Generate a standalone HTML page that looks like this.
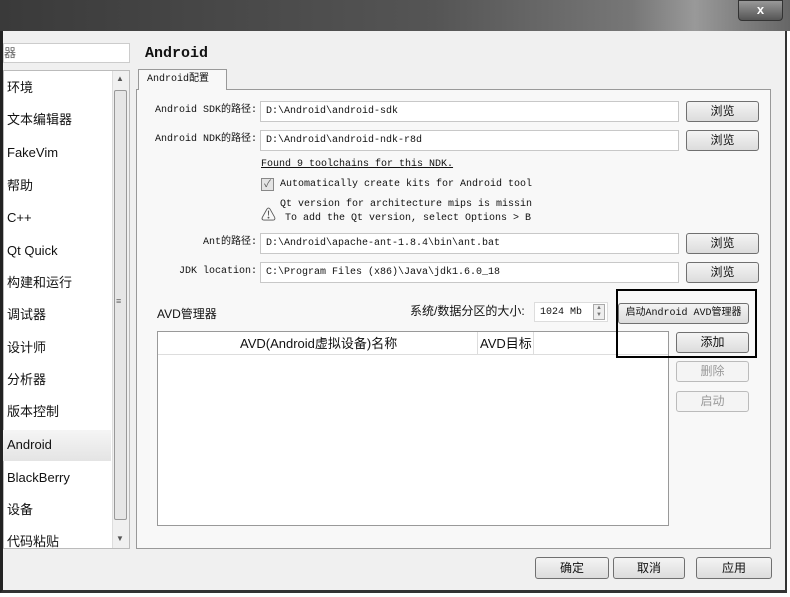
<!DOCTYPE html>
<html><head><meta charset="utf-8"><style>
*{box-sizing:border-box;margin:0;padding:0}
body{width:790px;height:597px;overflow:hidden;background:#fff;position:relative;font-family:"Liberation Sans","Noto Sans CJK SC",sans-serif;font-size:12px;color:#111}
.a{position:absolute}
.mono{font-family:"Liberation Mono","Noto Sans CJK SC",monospace;font-size:10px}
.btn{position:absolute;border:1px solid #707070;border-radius:3px;background:linear-gradient(#f4f4f4,#dcdcdc);text-align:center;font-size:12px;line-height:19px}
.dis{color:#999;border-color:#bbb;background:#f4f4f4}
.field{position:absolute;background:#fff;border:1px solid #c8c8c8;padding-left:5px;line-height:19px}
.lbl{position:absolute;text-align:right;line-height:20px}
.item{position:absolute;left:7px;font-size:13px;line-height:16px}
</style></head><body>
<div class="a" style="left:0;top:0;width:790px;height:31px;background:linear-gradient(90deg,#3a3a3a 0%,#555 55%,#777 80%,#999 88%,#666 100%)"></div>
<div class="a" style="left:738px;top:0;width:45px;height:21px;border:1px solid #333;border-radius:0 0 4px 4px;background:linear-gradient(#999,#555);color:#fff;font-weight:bold;text-align:center;line-height:18px;font-size:13px">x</div>
<div class="a" style="left:0;top:31px;width:787px;height:562px;background:#f0f0f0;border-left:3px solid #222;border-right:2px solid #333;border-bottom:3px solid #333"></div>
<div class="a" style="left:3px;top:43px;width:127px;height:20px;background:#fff;border:1px solid #ccc;font-size:12px;line-height:18px;color:#666">器</div>
<div class="a" style="left:3px;top:70px;width:127px;height:479px;background:#fff;border:1px solid #bbb"></div>
<div class="a" style="left:112px;top:71px;width:17px;height:477px;background:#f0f0f0;border-left:1px solid #ddd"></div>
<div class="a" style="left:114px;top:90px;width:13px;height:430px;background:#e6e6e6;border:1px solid #999;border-radius:2px"></div>
<div class="a" style="left:116px;top:74px;font-size:8px;color:#555">▲</div>
<div class="a" style="left:116px;top:534px;font-size:8px;color:#555">▼</div>
<div class="a" style="left:116px;top:296px;font-size:9px;color:#666">≡</div>
<div class="a" style="left:3px;top:430px;width:108px;height:31px;background:linear-gradient(#f5f5f5,#e4e4e4)"></div>
<div class="item" style="top:80px">环境</div>
<div class="item" style="top:112px">文本编辑器</div>
<div class="item" style="top:145px">FakeVim</div>
<div class="item" style="top:178px">帮助</div>
<div class="item" style="top:210px">C++</div>
<div class="item" style="top:243px">Qt Quick</div>
<div class="item" style="top:275px">构建和运行</div>
<div class="item" style="top:307px">调试器</div>
<div class="item" style="top:340px">设计师</div>
<div class="item" style="top:372px">分析器</div>
<div class="item" style="top:404px">版本控制</div>
<div class="item" style="top:437px">Android</div>
<div class="item" style="top:470px">BlackBerry</div>
<div class="item" style="top:502px">设备</div>
<div class="item" style="top:534px;height:14px;overflow:hidden">代码粘贴</div>
<div class="a mono" style="left:145px;top:45px;font-size:15px;font-weight:bold">Android</div>
<div class="a" style="left:136px;top:89px;width:635px;height:460px;background:#f8f8f8;border:1px solid #999"></div>
<div class="a mono" style="left:138px;top:69px;width:89px;height:21px;background:#f8f8f8;border:1px solid #999;border-bottom:none;padding-left:8px;line-height:20px">Android配置</div>
<div class="lbl mono" style="left:140px;top:101px;width:117px">Android SDK的路径:</div>
<div class="field mono" style="left:260px;top:101px;width:419px;height:21px">D:\Android\android-sdk</div>
<div class="btn" style="left:686px;top:101px;width:73px;height:21px">浏览</div>
<div class="lbl mono" style="left:140px;top:130px;width:117px">Android NDK的路径:</div>
<div class="field mono" style="left:260px;top:130px;width:419px;height:21px">D:\Android\android-ndk-r8d</div>
<div class="btn" style="left:686px;top:130px;width:73px;height:21px">浏览</div>
<div class="a mono" style="left:261px;top:159px;text-decoration:underline">Found 9 toolchains for this NDK.</div>
<div class="a" style="left:261px;top:178px;width:13px;height:13px;border:1px solid #888;background:#e4e4e4;font-size:10px;line-height:11px;text-align:center;color:#555">✓</div>
<div class="a mono" style="left:280px;top:179px">Automatically create kits for Android tool</div>
<div class="a" style="left:261px;top:204px;font-size:15px;color:#555">⚠</div>
<div class="a mono" style="left:280px;top:199px">Qt version for architecture mips is missin</div>
<div class="a mono" style="left:285px;top:213px">To add the Qt version, select Options &gt; B</div>
<div class="lbl mono" style="left:140px;top:233px;width:117px">Ant的路径:</div>
<div class="field mono" style="left:260px;top:233px;width:419px;height:21px">D:\Android\apache-ant-1.8.4\bin\ant.bat</div>
<div class="btn" style="left:686px;top:233px;width:73px;height:21px">浏览</div>
<div class="lbl mono" style="left:140px;top:262px;width:117px">JDK location:</div>
<div class="field mono" style="left:260px;top:262px;width:419px;height:21px">C:\Program Files (x86)\Java\jdk1.6.0_18</div>
<div class="btn" style="left:686px;top:262px;width:73px;height:21px">浏览</div>
<div class="a" style="left:157px;top:305px">AVD管理器</div>
<div class="a" style="left:410px;top:302px">系统/数据分区的大小:</div>
<div class="field mono" style="left:534px;top:302px;width:74px;height:20px;border-color:#ddd">1024 Mb</div>
<div class="a" style="left:593px;top:304px;width:12px;height:16px;border:1px solid #aaa;background:#eee;font-size:6px;line-height:7px;text-align:center;color:#777">▲<br>▼</div>
<div class="btn mono" style="left:618px;top:303px;width:131px;height:21px;font-size:10px">启动Android AVD管理器</div>
<div class="a" style="left:157px;top:331px;width:512px;height:195px;background:#fff;border:1px solid #999"></div>
<div class="a" style="left:158px;top:332px;width:510px;height:23px;background:#fff;border-bottom:1px solid #ddd"></div>
<div class="a" style="left:477px;top:332px;width:1px;height:23px;background:#ddd"></div>
<div class="a" style="left:533px;top:332px;width:1px;height:23px;background:#ddd"></div>
<div class="a" style="left:240px;top:336px;font-size:13px;line-height:16px">AVD(Android虚拟设备)名称</div>
<div class="a" style="left:480px;top:336px;font-size:13px;line-height:16px">AVD目标</div>
<div class="btn" style="left:676px;top:332px;width:73px;height:21px">添加</div>
<div class="btn dis" style="left:676px;top:361px;width:73px;height:21px">删除</div>
<div class="btn dis" style="left:676px;top:391px;width:73px;height:21px">启动</div>
<div class="a" style="left:616px;top:289px;width:141px;height:69px;border:2px solid #000"></div>
<div class="btn" style="left:535px;top:557px;width:74px;height:22px;line-height:20px">确定</div>
<div class="btn" style="left:613px;top:557px;width:72px;height:22px;line-height:20px">取消</div>
<div class="btn" style="left:696px;top:557px;width:76px;height:22px;line-height:20px">应用</div>
</body></html>
